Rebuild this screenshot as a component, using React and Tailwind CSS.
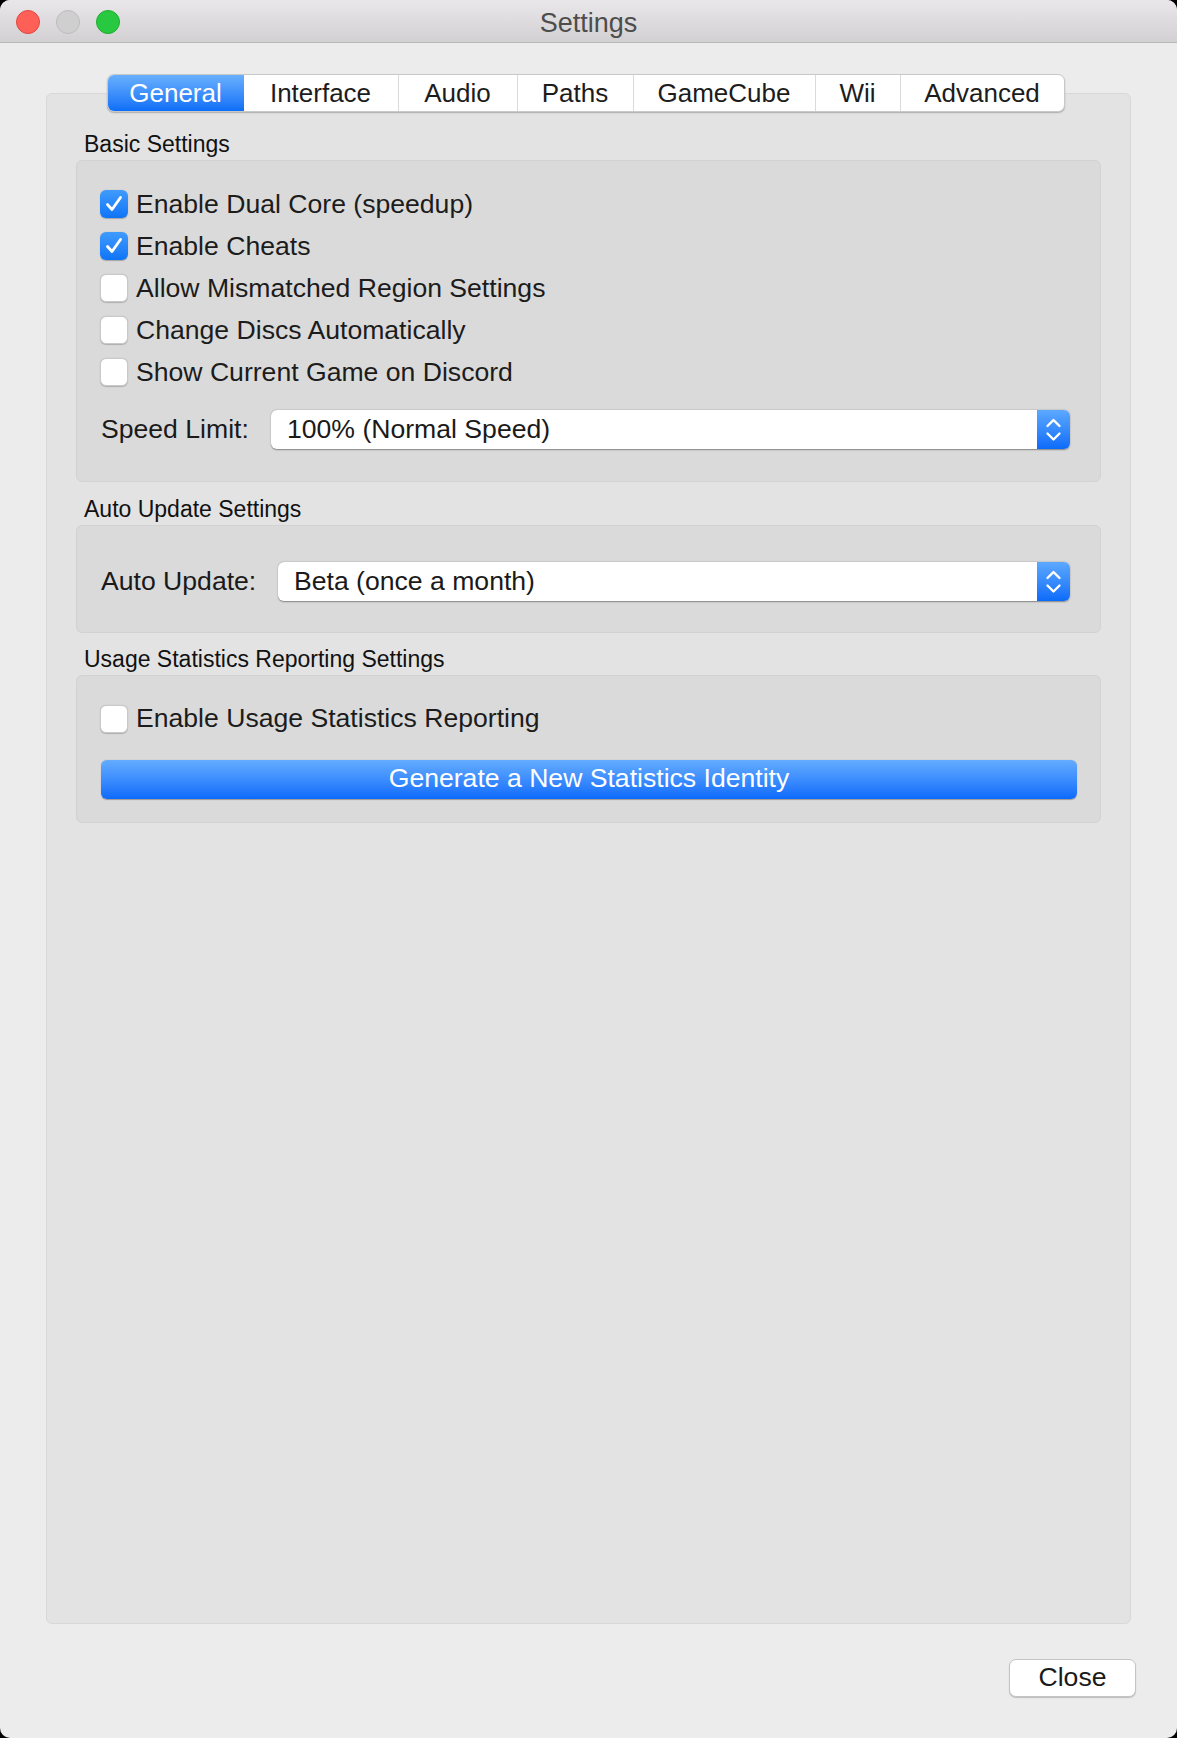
import React from "react";

const tabs = [
    { name: "General", w: "w-[136px]" },
    { name: "Interface", w: "w-[154px]" },
    { name: "Audio", w: "w-[119px]" },
    { name: "Paths", w: "w-[116px]" },
    { name: "GameCube", w: "w-[182px]" },
    { name: "Wii", w: "w-[85px]" },
    { name: "Advanced", w: "w-[164px]" },
];

const CheckBox = ({ label, checked }) => (
    <div className="flex items-center h-[28px]">
        {checked ? (
            <span className="w-[28px] h-[28px] rounded-[6px] bg-linear-to-b from-[#3f9bfd] to-[#0d74f6] flex items-center justify-center shadow-[0_0.5px_1px_rgba(0,0,0,0.25)]">
                <svg width="28" height="28" viewBox="0 0 28 28">
                    <path d="M7.5 14.5 L12 19.5 L20.5 7.5" fill="none" stroke="white" strokeWidth="2.8" strokeLinecap="round" strokeLinejoin="round" />
                </svg>
            </span>
        ) : (
            <span className="w-[28px] h-[28px] rounded-[6px] bg-white border-[0.5px] border-[#c9c9c9] shadow-[0_0.5px_1px_rgba(0,0,0,0.2)]" />
        )}
        <span className="ml-[8px] text-[26.6px] leading-none text-[#1c1c1c]">{label}</span>
    </div>
);

const Select = ({ value }) => (
    <div className="flex-1 flex h-[39px] rounded-[6px] bg-white shadow-[0_0.5px_1.5px_rgba(0,0,0,0.4)]">
        <div className="flex-1 flex items-center pl-[16px] text-[26.6px] text-[#1a1a1a]">{value}</div>
        <div className="w-[33px] rounded-r-[6px] bg-linear-to-b from-[#5ba8ff] to-[#0a6bfa]">
            <svg width="33" height="39" viewBox="0 0 33 39">
                <path d="M10.5 16 L16.5 10 L22.5 16" fill="none" stroke="white" strokeWidth="2.4" strokeLinecap="round" strokeLinejoin="round" />
                <path d="M10.5 23.5 L16.5 29.5 L22.5 23.5" fill="none" stroke="white" strokeWidth="2.4" strokeLinecap="round" strokeLinejoin="round" />
            </svg>
        </div>
    </div>
);

const GroupLabel = ({ children }) => (
    <div className="h-[26px] flex items-center pl-[8px] text-[23px] text-[#111]">{children}</div>
);

export default function App() {
    return (
        <div className="w-[1177px] h-[1738px] bg-black font-['Liberation_Sans',Arial,sans-serif]">
            <div className="h-full flex flex-col rounded-[10px] overflow-hidden bg-[#ececec]">
                {/* title bar */}
                <div className="h-[43px] shrink-0 grid grid-cols-[1fr_auto_1fr] items-center bg-linear-to-b from-[#e9e7e9] to-[#d2d0d2] border-b border-[#b9b9b9]">
                    <div className="flex items-center gap-[16px] pl-[16px] pt-[1px]">
                        <span className="w-[24px] h-[24px] rounded-full bg-[#fe5f57] border border-[#e2463f]" />
                        <span className="w-[24px] h-[24px] rounded-full bg-[#d0cfd0] border border-[#bdbcbd]" />
                        <span className="w-[24px] h-[24px] rounded-full bg-[#28c840] border border-[#1dad2b]" />
                    </div>
                    <div className="pt-[3px] text-[27px] text-[#4d4d4d]">Settings</div>
                    <div />
                </div>

                {/* tabs */}
                <div className="relative z-10 mt-[31px] h-[38px] flex justify-center pr-[6px]">
                    <div className="flex bg-white rounded-[7px] border-[0.5px] border-[#c8c8c8] shadow-[0_1px_1.5px_rgba(0,0,0,0.25)] overflow-hidden">
                        {tabs.map((t, i) => (
                            <div
                                key={t.name}
                                className={
                                    i === 0
                                        ? `${t.w} flex items-center justify-center text-[26px] text-white bg-linear-to-b from-[#68affd] to-[#0a6ef7]`
                                        : `${t.w} flex items-center justify-center text-[26px] text-[#1c1c1c] ${i > 1 ? "border-l border-[#dadada]" : ""}`
                                }
                            >
                                {t.name}
                            </div>
                        ))}
                    </div>
                </div>

                {/* pane */}
                <div className="-mt-[19px] mx-[46px] flex-1 rounded-[6px] bg-[#e3e3e3] border border-[#d8d8d8] px-[29px] pt-[37px]">
                    <GroupLabel>Basic Settings</GroupLabel>
                    <div className="mt-[3px] rounded-[6px] bg-[#dadada] border border-[#d2d2d2] pt-[29px] pl-[23px] pr-[30px] pb-[31px]">
                        <div className="flex flex-col gap-[14px]">
                            <CheckBox label="Enable Dual Core (speedup)" checked />
                            <CheckBox label="Enable Cheats" checked />
                            <CheckBox label="Allow Mismatched Region Settings" />
                            <CheckBox label="Change Discs Automatically" />
                            <CheckBox label="Show Current Game on Discord" />
                        </div>
                        <div className="mt-[24px] flex items-center">
                            <div className="w-[171px] pl-[1px] text-[26.6px] text-[#1a1a1a]">Speed Limit:</div>
                            <Select value="100% (Normal Speed)" />
                        </div>
                    </div>

                    <div className="mt-[14px]">
                        <GroupLabel>Auto Update Settings</GroupLabel>
                    </div>
                    <div className="mt-[3px] rounded-[6px] bg-[#dadada] border border-[#d2d2d2] pt-[36px] pl-[23px] pr-[30px] pb-[30px]">
                        <div className="flex items-center">
                            <div className="w-[178px] pl-[1px] text-[26.6px] text-[#1a1a1a]">Auto Update:</div>
                            <Select value="Beta (once a month)" />
                        </div>
                    </div>

                    <div className="mt-[13px]">
                        <GroupLabel>Usage Statistics Reporting Settings</GroupLabel>
                    </div>
                    <div className="mt-[3px] rounded-[6px] bg-[#dadada] border border-[#d2d2d2] pt-[29px] pl-[23px] pr-[23px] pb-[23px]">
                        <CheckBox label="Enable Usage Statistics Reporting" />
                        <div className="mt-[27px] ml-[1px] h-[39px] rounded-[6px] bg-linear-to-b from-[#64acff] to-[#0a6afb] shadow-[0_0.5px_1px_rgba(0,0,0,0.3)] flex items-center justify-center text-[26.6px] text-white">
                            Generate a New Statistics Identity
                        </div>
                    </div>
                </div>

                {/* footer */}
                <div className="flex justify-end pt-[35px] pb-[41px] pr-[41px]">
                    <div className="w-[127px] h-[38px] rounded-[7px] bg-white border-[0.5px] border-[#c4c4c4] shadow-[0_1px_1px_rgba(0,0,0,0.2)] flex items-center justify-center text-[26.6px] text-[#1a1a1a]">
                        Close
                    </div>
                </div>
            </div>
        </div>
    );
}
